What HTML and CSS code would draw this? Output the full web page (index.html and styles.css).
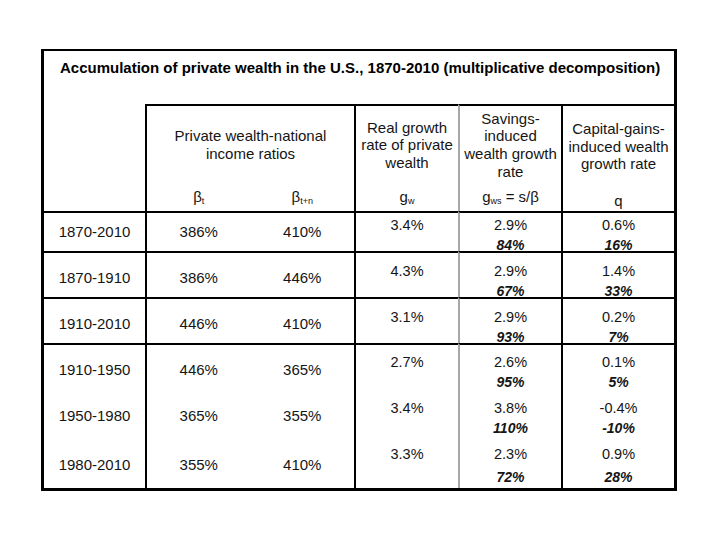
FILE: index.html
```html
<!DOCTYPE html>
<html>
<head>
<meta charset="utf-8">
<link rel="stylesheet" href="styles.css">
</head>
<body>
<div class="sheet">
  <div class="title">Accumulation of private wealth in the U.S., 1870-2010 (multiplicative decomposition)</div>
  <div class="grid">
    <div class="hblank"></div>
    <div class="hcell">
      <div class="htext">Private wealth-national<br>income ratios</div>
      <div class="hsym split"><span>β<sub>t</sub></span><span>β<sub>t+n</sub></span></div>
    </div>
    <div class="hcell">
      <div class="htext">Real growth<br>rate of private<br>wealth</div>
      <div class="hsym"><span>g<sub>w</sub></span></div>
    </div>
    <div class="hcell gray">
      <div class="htext">Savings-<br>induced<br>wealth growth<br>rate</div>
      <div class="hsym"><span>g<sub>ws</sub> = s/β</span></div>
    </div>
    <div class="hcell">
      <div class="htext">Capital-gains-<br>induced wealth<br>growth rate</div>
      <div class="hsym"><span>q</span></div>
    </div>

    <div class="cell lab r1 top">1870-2010</div>
    <div class="cell beta r1 top"><span>386%</span><span>410%</span></div>
    <div class="cell val r1 top">3.4%</div>
    <div class="cell val r1 top gray">2.9%<b>84%</b></div>
    <div class="cell val r1 top">0.6%<b>16%</b></div>

    <div class="cell lab r2 top">1870-1910</div>
    <div class="cell beta r2 top"><span>386%</span><span>446%</span></div>
    <div class="cell val r2 top">4.3%</div>
    <div class="cell val r2 top gray">2.9%<b>67%</b></div>
    <div class="cell val r2 top">1.4%<b>33%</b></div>

    <div class="cell lab r3 top">1910-2010</div>
    <div class="cell beta r3 top"><span>446%</span><span>410%</span></div>
    <div class="cell val r3 top">3.1%</div>
    <div class="cell val r3 top gray">2.9%<b>93%</b></div>
    <div class="cell val r3 top">0.2%<b>7%</b></div>

    <div class="cell lab r4 top">1910-1950</div>
    <div class="cell beta r4 top"><span>446%</span><span>365%</span></div>
    <div class="cell val r4 top">2.7%</div>
    <div class="cell val r4 top gray">2.6%<b>95%</b></div>
    <div class="cell val r4 top">0.1%<b>5%</b></div>

    <div class="cell lab r5">1950-1980</div>
    <div class="cell beta r5"><span>365%</span><span>355%</span></div>
    <div class="cell val r5">3.4%</div>
    <div class="cell val r5 gray">3.8%<b>110%</b></div>
    <div class="cell val r5">-0.4%<b>-10%</b></div>

    <div class="cell lab r6">1980-2010</div>
    <div class="cell beta r6"><span>355%</span><span>410%</span></div>
    <div class="cell val r6">3.3%</div>
    <div class="cell val r6 gray">2.3%<b class="low">72%</b></div>
    <div class="cell val r6">0.9%<b class="low">28%</b></div>
  </div>
</div>
</body>
</html>
```

FILE: styles.css
```css
html, body {
  margin: 0;
  padding: 0;
  background: #fff;
}
body {
  padding: 49px 0 0 41px;
  font-family: "Liberation Sans", Arial, sans-serif;
  color: #151515;
}
.sheet {
  width: 630px;
  border: 3px solid #000;
  border-top-width: 2px;
}
.title {
  height: 53px;
  box-sizing: border-box;
  padding: 8px 0 0 16px;
  font-size: 15px;
  line-height: 18px;
  font-weight: bold;
  color: #000;
  white-space: nowrap;
}
.grid {
  display: grid;
  grid-template-columns: 101px 209px 104px 103px 113px;
}
.hblank {
  height: 107px;
}
.hcell {
  height: 107px;
  box-sizing: border-box;
  border-top: 2px solid #000;
  border-left: 2px solid #000;
  display: flex;
  flex-direction: column;
  font-size: 15px;
}
.hcell.gray, .cell.gray {
  border-left-color: #a8a8a8;
}
.htext {
  height: 80px;
  padding-top: 1px;
  box-sizing: border-box;
  display: flex;
  align-items: center;
  justify-content: center;
  text-align: center;
  line-height: 17.6px;
}
.hsym {
  flex: 1;
  display: flex;
  align-items: center;
  justify-content: center;
  line-height: 20px;
  padding-top: 4px;
}
.hsym.split span {
  flex: 1;
  text-align: center;
}
.hsym sub {
  font-size: 9px;
  vertical-align: -2px;
}
.cell {
  box-sizing: border-box;
  line-height: 20px;
  font-size: 15px;
  text-align: center;
}
.cell.top {
  border-top: 2px solid #000;
}
.beta, .val {
  border-left: 2px solid #000;
}
.beta {
  display: flex;
}
.beta span {
  flex: 1;
}
.val {
  display: flex;
  flex-direction: column;
  align-items: center;
  font-size: 14.5px;
}
.val b {
  font-size: 14px;
  font-style: italic;
  font-weight: bold;
}
.val b.low {
  margin-top: 3px;
}
.r1 { height: 40px; }
.r2, .r3 { height: 46px; }
.r4 { height: 48px; }
.r5 { height: 46px; }
.r6 { height: 51px; }

.lab.r1, .beta.r1 { padding-top: 9px; }
.lab.r2, .beta.r2, .lab.r3, .beta.r3, .lab.r4, .beta.r4, .lab.r5, .beta.r5 { padding-top: 15px; }
.lab.r6, .beta.r6 { padding-top: 18px; }
.val.r1 { padding-top: 2px; }
.val.r2, .val.r3 { padding-top: 8px; }
.val.r4, .val.r5, .val.r6 { padding-top: 7px; }
```
